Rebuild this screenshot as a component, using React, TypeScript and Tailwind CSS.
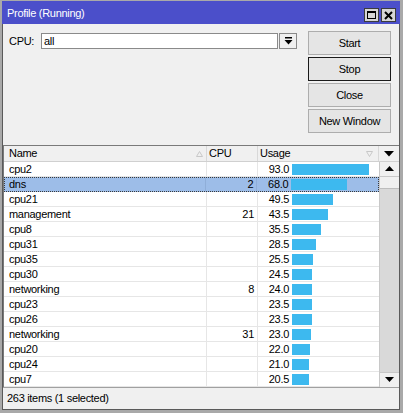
import React from 'react';

type Row = { name: string; cpu: string; usage: number };

const ROWS: Row[] = [
  { name: 'cpu2', cpu: '', usage: 93.0 },
  { name: 'dns', cpu: '2', usage: 68.0 },
  { name: 'cpu21', cpu: '', usage: 49.5 },
  { name: 'management', cpu: '21', usage: 43.5 },
  { name: 'cpu8', cpu: '', usage: 35.5 },
  { name: 'cpu31', cpu: '', usage: 28.5 },
  { name: 'cpu35', cpu: '', usage: 25.5 },
  { name: 'cpu30', cpu: '', usage: 24.5 },
  { name: 'networking', cpu: '8', usage: 24.0 },
  { name: 'cpu23', cpu: '', usage: 23.5 },
  { name: 'cpu26', cpu: '', usage: 23.5 },
  { name: 'networking', cpu: '31', usage: 23.0 },
  { name: 'cpu20', cpu: '', usage: 22.0 },
  { name: 'cpu24', cpu: '', usage: 21.0 },
  { name: 'cpu7', cpu: '', usage: 20.5 },
];

const SELECTED = 1;

function WinButton({ label, isDefault }: { label: string; isDefault?: boolean }) {
  return (
    <div
      className={
        'h-[24px] w-[83px] flex items-center justify-center bg-[#e5e5e5] border ' +
        (isDefault ? 'border-[#1a1a1a]' : 'border-[#adadad]')
      }
    >
      {label}
    </div>
  );
}

function TitleButton({ children }: { children: React.ReactNode }) {
  return (
    <div className="w-[15px] h-[14px] bg-[#d6d6d6] border border-[#3c3c3c] flex items-center justify-center">
      {children}
    </div>
  );
}

export default function App() {
  return (
    <div className="w-[403px] h-[413px] bg-[#a9a9a9] pt-px pl-[2px] pr-[3px] pb-[3px] flex flex-col font-['Liberation_Sans',Arial,sans-serif] text-[11px] tracking-[-0.3px] text-black leading-none">
      {/* title bar */}
      <div className="h-[23px] bg-[#4b4fca] flex items-end pb-[2px] pl-[5px] pr-[4px] text-white text-[11px]">
        <span className="flex-1 pb-[3px]">Profile (Running)</span>
        <div className="flex gap-[2px]">
          <TitleButton>
            <div className="w-[9px] h-[8px] border border-black border-t-2" />
          </TitleButton>
          <TitleButton>
            <svg width="9" height="9" viewBox="0 0 9 9">
              <path d="M1 1 L8 8 M8 1 L1 8" stroke="#000" strokeWidth="2" />
            </svg>
          </TitleButton>
        </div>
      </div>

      {/* body */}
      <div className="flex-1 bg-[#f0f0f0] flex flex-col border-l border-r border-b border-[#5a5a5a]">
        {/* top controls */}
        <div className="h-[121px] flex">
          <div className="flex items-center h-[16px] mt-[9px] ml-[6px]">
            <span className="w-[32px]">CPU:</span>
            <div className="w-[237px] h-[16px] bg-white border border-[#8a8a8a] flex items-center pl-[2px]">
              all
            </div>
            <div className="ml-px w-[18px] h-[16px] bg-[#f0f0f0] border border-[#8a8a8a] flex items-center justify-center">
              <svg width="9" height="9" viewBox="0 0 9 9">
                <rect x="1" y="0" width="7" height="1.5" fill="#000" />
                <path d="M0.5 3 H8.5 L4.5 7.5 Z" fill="#000" />
              </svg>
            </div>
          </div>
          <div className="ml-auto mr-[8px] mt-[7px] flex flex-col gap-[2px]">
            <WinButton label="Start" />
            <WinButton label="Stop" isDefault />
            <WinButton label="Close" />
            <WinButton label="New Window" />
          </div>
        </div>

        {/* table */}
        <div className="border-t border-l border-[#7a7a7a] flex flex-col">
          {/* header */}
          <div className="h-[16px] flex border-b border-[#d0d0d0] bg-[#f0f0f0]">
            <div className="w-[203px] border-r border-[#d8d8d8] flex items-center pl-[5px] pr-[3px]">
              <span className="flex-1">Name</span>
              <svg width="7" height="6" viewBox="0 0 7 6">
                <path d="M3.5 0.5 L6.5 5.5 H0.5 Z" fill="none" stroke="#c8c8c8" />
              </svg>
            </div>
            <div className="w-[51px] border-r border-[#d8d8d8] flex items-center pl-[2px]">CPU</div>
            <div className="w-[121px] border-r border-[#d8d8d8] flex items-center pl-[2px] pr-[5px]">
              <span className="flex-1">Usage</span>
              <svg width="7" height="6" viewBox="0 0 7 6">
                <path d="M0.5 0.5 H6.5 L3.5 5.5 Z" fill="none" stroke="#c8c8c8" />
              </svg>
            </div>
            <div className="w-[20px] flex items-center justify-center">
              <svg width="10" height="6" viewBox="0 0 10 6">
                <path d="M0 0 H10 L5 5.5 Z" fill="#000" />
              </svg>
            </div>
          </div>

          {/* rows + scrollbar */}
          <div className="flex h-[225px]">
            <div className="flex flex-col w-[375px]">
              {ROWS.map((r, i) => {
                const sel = i === SELECTED;
                return (
                  <div
                    key={i}
                    className={
                      'h-[15px] flex ' +
                      (sel
                        ? 'bg-[#9dbde8] border border-dotted border-[#3a3a3a]'
                        : 'bg-white border-b border-[#e6e6e6]')
                    }
                  >
                    <div className={'w-[203px] flex items-center pl-[5px] border-r ' + (sel ? 'border-[#8faed8] -ml-px' : 'border-[#e6e6e6]')}>
                      {r.name}
                    </div>
                    <div className={'w-[51px] flex items-center justify-end pr-[3px] border-r ' + (sel ? 'border-[#8faed8]' : 'border-[#e6e6e6]')}>
                      {r.cpu}
                    </div>
                    <div className="w-[121px] flex items-center">
                      <span className="w-[31px] text-right">{r.usage.toFixed(1)}</span>
                      <div
                        className="ml-[3px] h-[11px] bg-[#3db9ef]"
                        style={{ width: Math.round(r.usage * 0.83) }}
                      />
                    </div>
                  </div>
                );
              })}
            </div>
            {/* scrollbar */}
            <div className="w-[20px] flex flex-col bg-[#d9d9d9] border-l border-[#c8c8c8]">
              <div className="h-[15px] bg-[#f0f0f0] border-b border-[#c8c8c8] flex items-center justify-center">
                <svg width="9" height="6" viewBox="0 0 9 6">
                  <path d="M4.5 0 L9 5 H0 Z" fill="#000" />
                </svg>
              </div>
              <div className="h-[12px] bg-[#f0f0f0] border-b border-[#bdbdbd]" />
              <div className="flex-1" />
              <div className="h-[15px] bg-[#f0f0f0] border-t border-[#c8c8c8] flex items-center justify-center">
                <svg width="9" height="6" viewBox="0 0 9 6">
                  <path d="M0 0 H9 L4.5 5 Z" fill="#000" />
                </svg>
              </div>
            </div>
          </div>
        </div>

        {/* status bar */}
        <div className="flex-1 border-t border-[#a0a0a0] flex items-center pl-[4px]">
          263 items (1 selected)
        </div>
      </div>
    </div>
  );
}
